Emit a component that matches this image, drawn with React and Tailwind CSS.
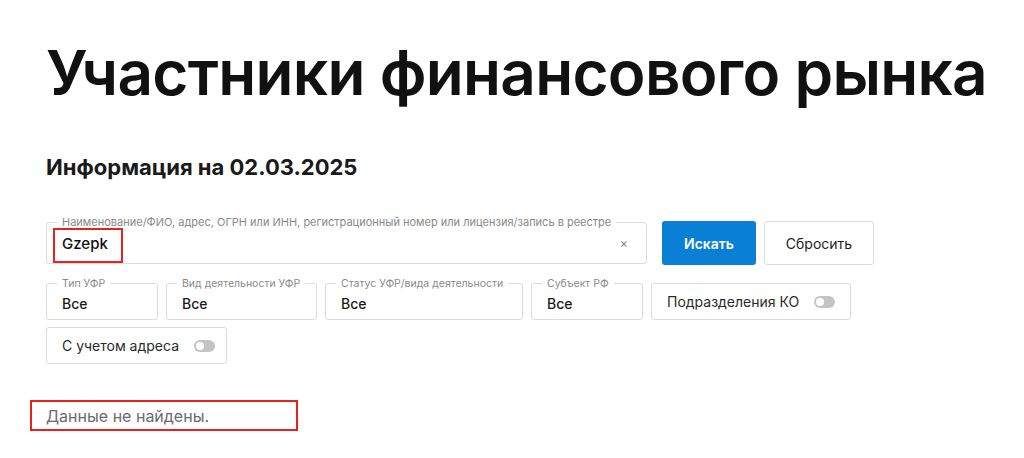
import React from "react";

function Toggle() {
  return (
    <span className="relative inline-block w-[21px] h-[12px] rounded-full bg-[#c4c4c4]">
      <span className="absolute left-[2px] top-[2px] w-[8px] h-[8px] rounded-full bg-white" />
    </span>
  );
}

function SelectField({ label, value, w }) {
  return (
    <div className={`relative h-[37px] border border-[#dcdcdc] rounded-[3px] flex items-center pl-[15px] ${w}`}>
      <span className="absolute -top-[7px] left-[10px] px-[5px] bg-white text-[10.5px] leading-[13px] text-[#8a8a8a] whitespace-nowrap">
        {label}
      </span>
      <span className="text-[14px] font-medium text-[#1a1a1a] pt-[3px]">{value}</span>
    </div>
  );
}

function ToggleField({ label, w }) {
  return (
    <div className={`h-[37px] border border-[#dcdcdc] rounded-[3px] flex items-center pl-[15px] gap-[15px] ${w}`}>
      <span className="text-[14px] text-[#2a2a2a]">{label}</span>
      <Toggle />
    </div>
  );
}

export default function App() {
  return (
    <div
      className="w-[1024px] h-[458px] bg-white overflow-hidden pl-[46px]"
      style={{ fontFamily: "Inter, 'Noto Sans', sans-serif" }}
    >
      <h1 className="pt-[41px] text-[62px] leading-[64px] font-semibold tracking-[-0.7px] text-[#111] whitespace-nowrap">
        Участники финансового рынка
      </h1>
      <h2 className="mt-[49px] text-[22px] leading-[26px] font-bold text-[#1a1a1a]">
        Информация на 02.03.2025
      </h2>

      <div className="mt-[41px] flex items-center">
        <div className="relative w-[601px] h-[42px] border border-[#dcdcdc] rounded-[3px] flex items-center pl-[15px] pr-[18px]">
          <span className="absolute -top-[7px] left-[10px] px-[5px] bg-white text-[11px] leading-[13px] text-[#8a8a8a] whitespace-nowrap">
            Наименование/ФИО, адрес, ОГРН или ИНН, регистрационный номер или лицензия/запись в реестре
          </span>
          <span className="flex-1 text-[15px] font-medium text-[#111] pt-[2px]">Gzepk</span>
          <span className="text-[13px] text-[#888] leading-none">×</span>
          <div className="absolute left-[6px] top-[5px] w-[70px] h-[35px] border-2 border-[#e8211c]" />
        </div>
        <button className="ml-[15px] w-[94px] h-[44px] rounded-[3px] bg-[#0a7fd6] text-white text-[14px] font-semibold">
          Искать
        </button>
        <button className="ml-[8px] w-[110px] h-[44px] rounded-[3px] border border-[#dcdcdc] bg-white text-[#222] text-[14px]">
          Сбросить
        </button>
      </div>

      <div className="mt-[18px] flex gap-[8px]">
        <SelectField label="Тип УФР" value="Все" w="w-[112px]" />
        <SelectField label="Вид деятельности УФР" value="Все" w="w-[151px]" />
        <SelectField label="Статус УФР/вида деятельности" value="Все" w="w-[198px]" />
        <SelectField label="Субъект РФ" value="Все" w="w-[112px]" />
        <ToggleField label="Подразделения КО" w="w-[200px]" />
      </div>
      <div className="mt-[7px] flex">
        <ToggleField label="С учетом адреса" w="w-[181px]" />
      </div>

      <div className="mt-[36px] -ml-[16px] w-[268px] h-[31px] border-2 border-[#e8211c] flex items-center pl-[14px]">
        <span className="text-[16px] text-[#6b6b6b]">Данные не найдены.</span>
      </div>
    </div>
  );
}
